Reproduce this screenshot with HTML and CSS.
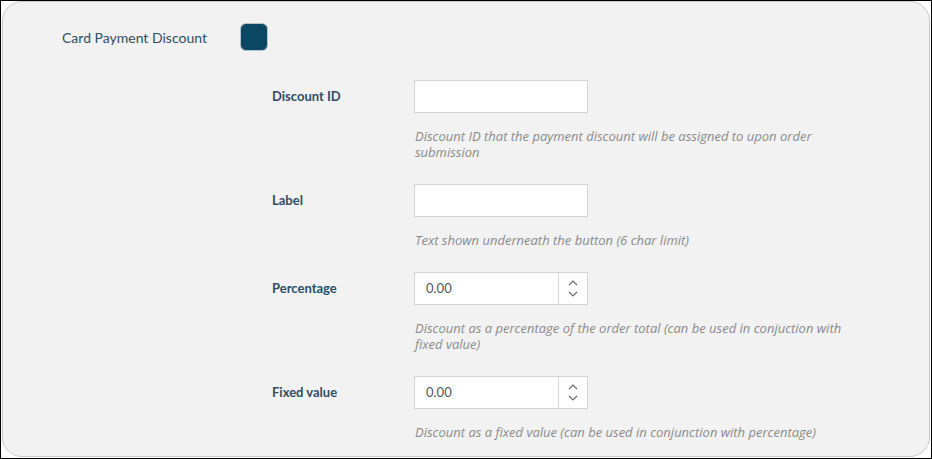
FILE: index.html
```html
<!DOCTYPE html>
<html>
<head>
<meta charset="utf-8">
<link rel="stylesheet" href="styles.css">
</head>
<body>
<div class="frame">
  <div class="card">
    <div class="header">
      <span class="title">Card Payment Discount</span>
      <span class="toggle"></span>
    </div>
    <div class="fields">
      <div class="row">
        <label class="label">Discount ID</label>
        <div class="control">
          <div class="input"></div>
          <p class="help">Discount ID that the payment discount will be assigned to upon order submission</p>
        </div>
      </div>
      <div class="row">
        <label class="label">Label</label>
        <div class="control">
          <div class="input"></div>
          <p class="help">Text shown underneath the button (6 char limit)</p>
        </div>
      </div>
      <div class="row">
        <label class="label">Percentage</label>
        <div class="control">
          <div class="input number">
            <span class="value">0.00</span>
            <span class="spin">
              <svg width="10" height="6" viewBox="0 0 10 6"><path d="M1 5 L5 1 L9 5" fill="none" stroke="#666" stroke-width="1.1"/></svg>
              <svg width="10" height="6" viewBox="0 0 10 6"><path d="M1 1 L5 5 L9 1" fill="none" stroke="#666" stroke-width="1.1"/></svg>
            </span>
          </div>
          <p class="help">Discount as a percentage of the order total (can be used in conjuction with fixed value)</p>
        </div>
      </div>
      <div class="row">
        <label class="label">Fixed value</label>
        <div class="control">
          <div class="input number">
            <span class="value">0.00</span>
            <span class="spin">
              <svg width="10" height="6" viewBox="0 0 10 6"><path d="M1 5 L5 1 L9 5" fill="none" stroke="#666" stroke-width="1.1"/></svg>
              <svg width="10" height="6" viewBox="0 0 10 6"><path d="M1 1 L5 5 L9 1" fill="none" stroke="#666" stroke-width="1.1"/></svg>
            </span>
          </div>
          <p class="help">Discount as a fixed value (can be used in conjunction with percentage)</p>
        </div>
      </div>
    </div>
  </div>
</div>
</body>
</html>
```

FILE: styles.css
```css
* { box-sizing: border-box; }
html, body { margin: 0; padding: 0; background: #fff; }
body { font-family: "Lato", "Liberation Sans", sans-serif; }

.frame {
  width: 932px;
  height: 459px;
  border: 1px solid #000;
  background: #fff;
  padding: 0 1px 1px 1px;
  display: flex;
}

.card {
  flex: 1;
  background: #f2f2f2;
  border: 1px solid #c9c9c9;
  border-radius: 20px;
  padding: 21px 0 0 59px;
}

.header {
  display: flex;
  align-items: center;
  height: 28px;
}

.title {
  width: 178px;
  font-size: 14px;
  color: #2f4d64;
}

.toggle {
  width: 28px;
  height: 28px;
  border-radius: 6px;
  background: #0b4763;
  border: 1px solid #b8c4cc;
}

.fields {
  padding-left: 210px;
  margin-top: 29px;
}

.row {
  display: flex;
  align-items: flex-start;
  margin-bottom: 24px;
}

.label {
  width: 142px;
  height: 33px;
  line-height: 33px;
  font-size: 13px;
  font-weight: 700;
  color: #2f4d64;
}

.control { width: 440px; }

.input {
  width: 174px;
  height: 33px;
  background: #fff;
  border: 1px solid #d4d4d4;
  display: flex;
  align-items: stretch;
}

.value {
  flex: 1;
  padding-left: 11px;
  line-height: 31px;
  font-size: 13px;
  color: #555;
}

.spin {
  width: 29px;
  border-left: 1px solid #d4d4d4;
  display: flex;
  flex-direction: column;
  align-items: center;
  justify-content: center;
  gap: 5px;
}
.spin svg { display: block; }

.help {
  margin: 15px 0 0 1px;
  font-family: "Open Sans", "Lato", sans-serif;
  font-size: 13px;
  line-height: 16px;
  font-style: italic;
  color: #8a8a8a;
  width: 432px;
}
```
